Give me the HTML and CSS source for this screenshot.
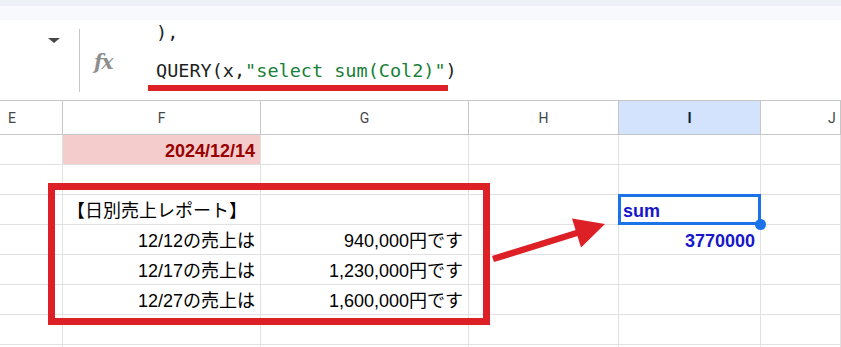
FILE: index.html
```html
<!DOCTYPE html>
<html lang="ja">
<head>
<meta charset="utf-8">
<title>Sheet</title>
<link rel="stylesheet" href="styles.css">
</head>
<body>
<div class="page">
  <div class="band-top"></div>
  <div class="band-mid"></div>
  <div class="fbar">
    <div class="namebox"><span class="tri"></span></div>
    <div class="sep"></div>
    <div class="fx">fx</div>
    <div class="ftext">
      <div class="fl">),</div>
      <div class="fl">QUERY(x,<span class="str">"select sum(Col2)"</span>)</div>
    </div>
  </div>
  <div class="grid">
    <div class="h hE">E</div>
    <div class="h">F</div>
    <div class="h">G</div>
    <div class="h">H</div>
    <div class="h hsel">I</div>
    <div class="h hJ">J</div>

    <div class="c"></div>
    <div class="c r date">2024/12/14</div>
    <div class="c"></div>
    <div class="c"></div>
    <div class="c"></div>
    <div class="c"></div>

    <div class="c"></div>
    <div class="c"></div>
    <div class="c"></div>
    <div class="c"></div>
    <div class="c"></div>
    <div class="c"></div>

    <div class="c"></div>
    <div class="c l">【日別売上レポート】</div>
    <div class="c"></div>
    <div class="c"></div>
    <div class="c l blue sel">sum<span class="handle"></span></div>
    <div class="c"></div>

    <div class="c"></div>
    <div class="c r">12/12の売上は</div>
    <div class="c r">940,000円です</div>
    <div class="c"></div>
    <div class="c r blue">3770000</div>
    <div class="c"></div>

    <div class="c"></div>
    <div class="c r">12/17の売上は</div>
    <div class="c r">1,230,000円です</div>
    <div class="c"></div>
    <div class="c"></div>
    <div class="c"></div>

    <div class="c"></div>
    <div class="c r">12/27の売上は</div>
    <div class="c r">1,600,000円です</div>
    <div class="c"></div>
    <div class="c"></div>
    <div class="c"></div>

    <div class="c"></div>
    <div class="c"></div>
    <div class="c"></div>
    <div class="c"></div>
    <div class="c"></div>
    <div class="c"></div>

    <div class="c"></div>
    <div class="c"></div>
    <div class="c"></div>
    <div class="c"></div>
    <div class="c"></div>
    <div class="c"></div>
  </div>

  <div class="ann-underline"></div>
  <div class="ann-box"></div>
  <svg class="ann-arrow" viewBox="0 0 841 347" width="841" height="347">
    <line x1="493" y1="259" x2="580" y2="232" stroke="#dd1f26" stroke-width="6.5"/>
    <polygon points="605,224 572,218.5 581,247.5" fill="#dd1f26"/>
  </svg>
</div>
</body>
</html>
```

FILE: styles.css
```css
html, body {
  margin: 0;
  padding: 0;
  background: #ffffff;
}

.page {
  position: relative;
  width: 841px;
  height: 347px;
  overflow: hidden;
  font-family: "Liberation Sans", Arial, "Noto Sans CJK JP", sans-serif;
}

.band-top {
  height: 6px;
  background: #edf1f7;
}

.band-mid {
  height: 14px;
  background: #f8f9fc;
}

.fbar {
  display: flex;
  height: 80px;
  overflow: hidden;
  background: #ffffff;
}

.namebox {
  width: 79px;
  flex: none;
  padding: 18px 0 0 48px;
  box-sizing: border-box;
}

.tri {
  display: block;
  width: 0;
  height: 0;
  border-left: 6px solid transparent;
  border-right: 6px solid transparent;
  border-top: 5px solid #444746;
}

.sep {
  width: 1px;
  flex: none;
  height: 63px;
  margin-top: 9px;
  background: #c4c7c5;
}

.fx {
  width: 76px;
  flex: none;
  box-sizing: border-box;
  padding: 32px 0 0 14px;
  font-family: "DejaVu Serif", "Liberation Serif", serif;
  font-style: italic;
  font-weight: 700;
  font-size: 20px;
  line-height: 20px;
  color: #8e8e8e;
  letter-spacing: -1px;
}

.ftext {
  flex: 1;
  margin-top: -6px;
  font-family: "DejaVu Sans Mono", "Liberation Mono", monospace;
  font-size: 18.5px;
  line-height: 38px;
  color: #1f1f1f;
}

.fl {
  white-space: pre;
}

.str {
  color: #188038;
}

.grid {
  display: grid;
  grid-template-columns: 63px 198px 208px 150px 142px 1fr;
  grid-template-rows: 35px repeat(8, 30px);
}

.h {
  box-sizing: border-box;
  border-top: 1px solid #c4c7c5;
  border-bottom: 1px solid #c4c7c5;
  border-right: 1px solid #c4c7c5;
  display: flex;
  align-items: center;
  justify-content: center;
  font-family: "Roboto", "Liberation Sans", sans-serif;
  font-size: 14px;
  color: #444746;
}

.hE {
  justify-content: flex-start;
  padding-left: 8px;
}

.hJ {
  justify-content: flex-start;
  padding-left: 67px;
}

.hsel {
  background: #d3e3fd;
  color: #0b1e3f;
  font-weight: 700;
}

.c {
  box-sizing: border-box;
  border-right: 1px solid #e1e1e1;
  border-bottom: 1px solid #e1e1e1;
  display: flex;
  align-items: flex-end;
  padding: 0 5px 2px 4px;
  font-size: 18px;
  line-height: 22px;
  color: #000000;
  white-space: nowrap;
  position: relative;
}

.r {
  justify-content: flex-end;
}

.l {
  justify-content: flex-start;
}

.date {
  background: #f4cccc;
  color: #990000;
  font-weight: 700;
}

.blue {
  color: #1717c9;
  font-weight: 700;
}

.sel::after {
  content: "";
  position: absolute;
  top: -1px;
  left: -1px;
  right: -1px;
  bottom: -1px;
  border: 3px solid #1a73e8;
}

.handle {
  position: absolute;
  right: -6px;
  bottom: -6px;
  width: 11px;
  height: 11px;
  border-radius: 50%;
  background: #1a73e8;
  z-index: 2;
}

.ann-underline {
  position: absolute;
  left: 148px;
  top: 85px;
  width: 300px;
  height: 6px;
  background: #dd1f26;
}

.ann-box {
  position: absolute;
  left: 48px;
  top: 183px;
  width: 442px;
  height: 142px;
  box-sizing: border-box;
  border: 7px solid #dd1f26;
}

.ann-arrow {
  position: absolute;
  left: 0;
  top: 0;
}
```
